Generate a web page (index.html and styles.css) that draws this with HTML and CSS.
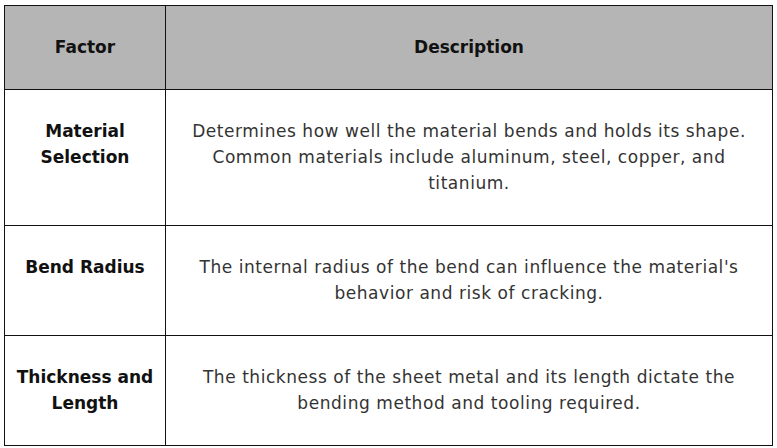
FILE: index.html
```html
<!DOCTYPE html>
<html lang="en">
<head>
<meta charset="utf-8">
<title>Factors</title>
<link rel="stylesheet" href="styles.css">
</head>
<body>
<table class="factors">
  <thead>
    <tr>
      <th class="col-factor">Factor</th>
      <th class="col-desc">Description</th>
    </tr>
  </thead>
  <tbody>
    <tr>
      <td class="factor">Material Selection</td>
      <td class="desc">Determines how well the material bends and holds its shape. Common materials include aluminum, steel, copper, and titanium.</td>
    </tr>
    <tr>
      <td class="factor">Bend Radius</td>
      <td class="desc">The internal radius of the bend can influence the material's behavior and risk of cracking.</td>
    </tr>
    <tr>
      <td class="factor">Thickness and Length</td>
      <td class="desc">The thickness of the sheet metal and its length dictate the bending method and tooling required.</td>
    </tr>
  </tbody>
</table>
</body>
</html>
```
FILE: styles.css
```css
html, body {
  margin: 0;
  padding: 0;
  background: #ffffff;
}
body {
  padding: 5px 0 0 4px;
  font-family: "DejaVu Sans", "Liberation Sans", sans-serif;
}
.factors {
  border-collapse: collapse;
  width: 769px;
  table-layout: fixed;
}
.factors th,
.factors td {
  border: 1px solid #111111;
  padding: 28px 10px 29px;
  text-align: center;
  vertical-align: top;
  font-size: 17px;
  line-height: 26px;
}
.factors th {
  background: #b5b5b5;
  color: #111111;
  font-weight: bold;
}
.col-factor {
  width: 140px;
}
.factor {
  font-weight: bold;
  color: #111111;
}
.desc {
  color: #333333;
  font-weight: normal;
  letter-spacing: 0.55px;
  padding-left: 14px;
  padding-right: 14px;
}
```
